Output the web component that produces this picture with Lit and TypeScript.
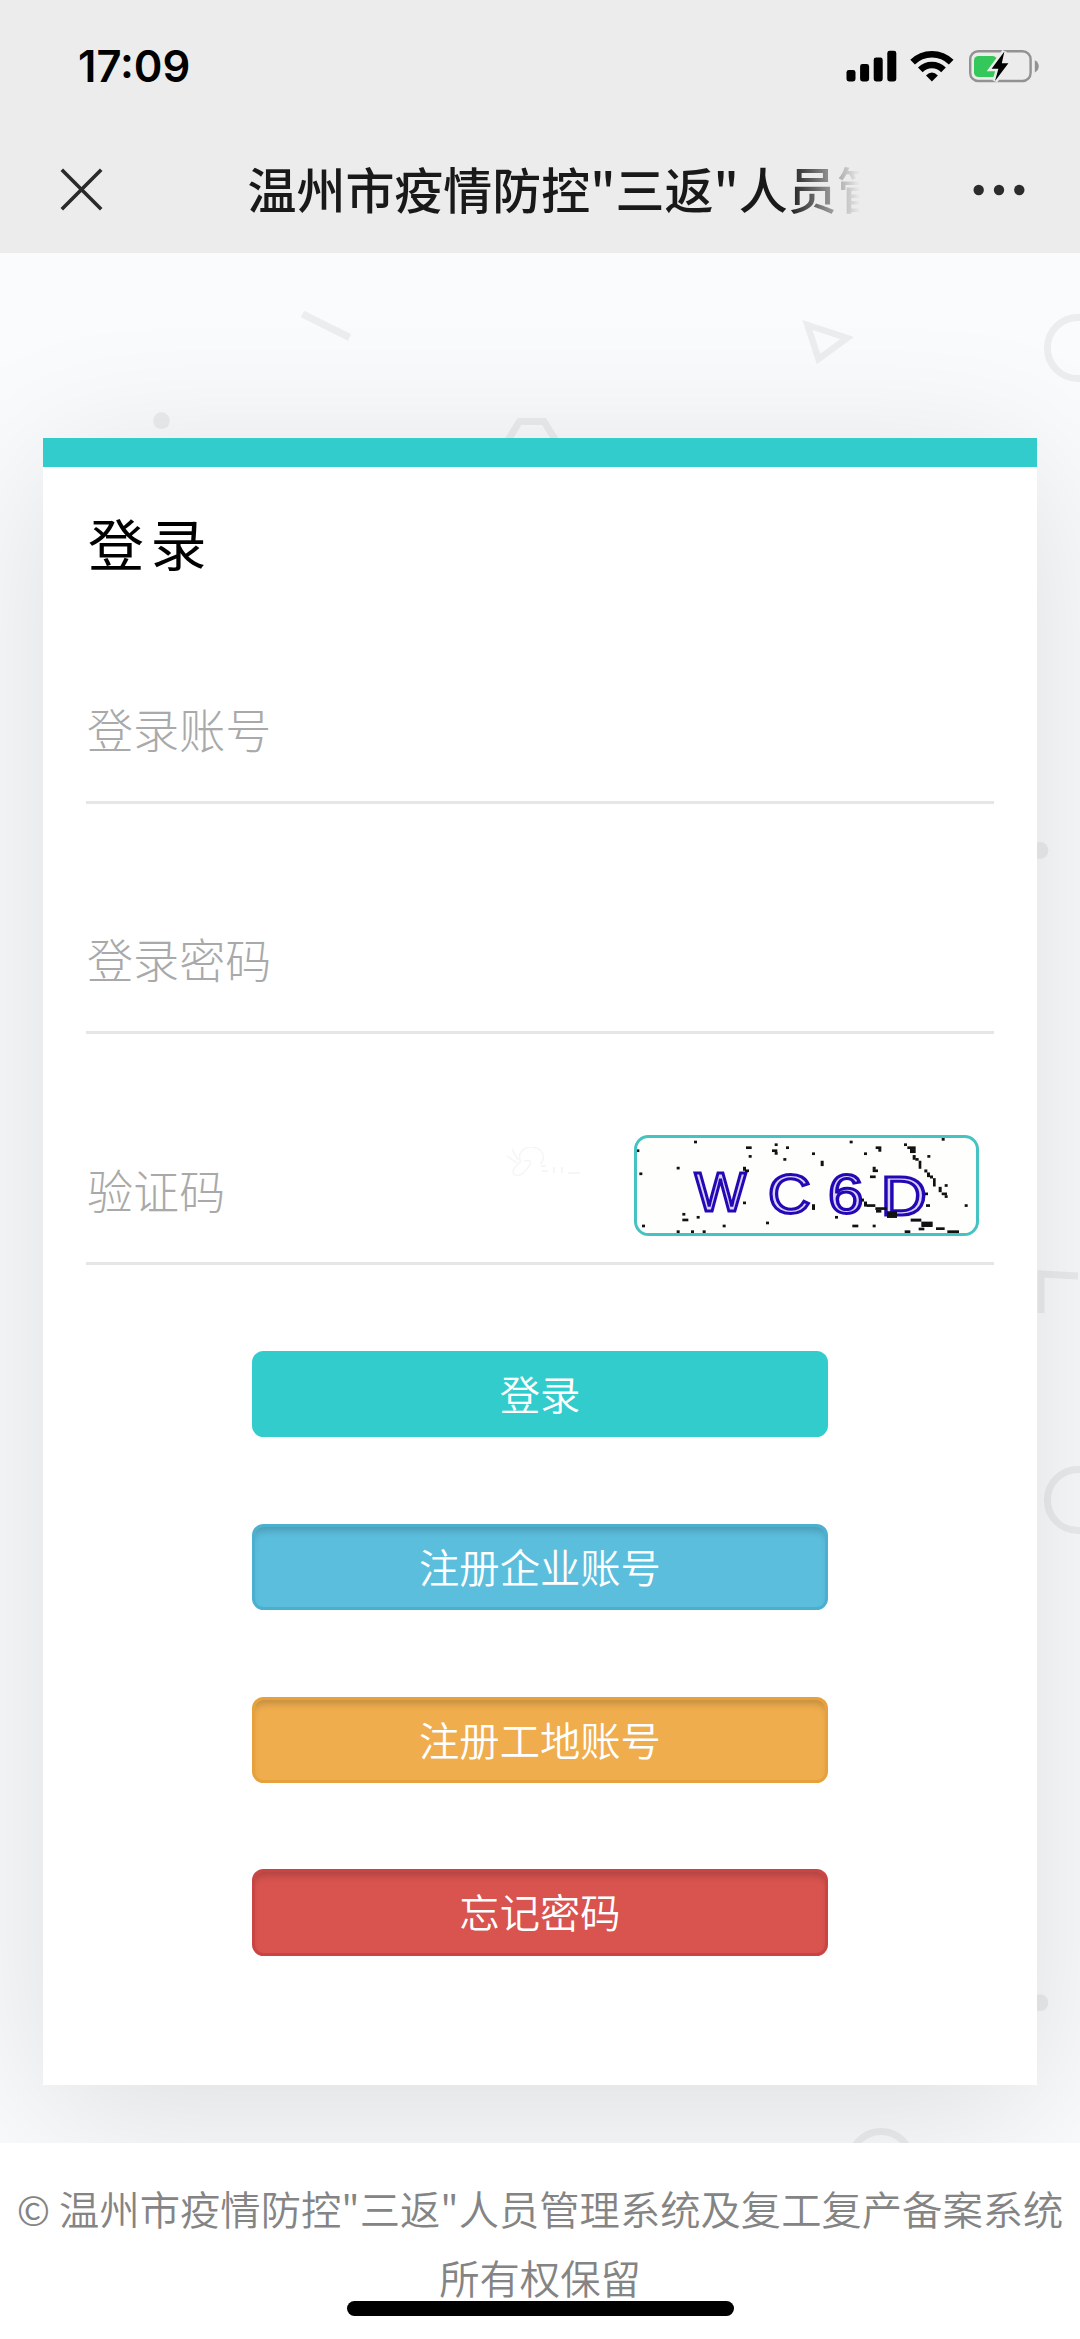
import { LitElement, html, css, svg } from "lit";
import { customElement, property } from "lit/decorators.js";

const FONT = css`"Noto Sans CJK SC", "Noto Sans", sans-serif`;

@customElement("status-bar")
class StatusBar extends LitElement {
  static styles = css`
    :host { display: flex; justify-content: space-between; height: 132px; box-sizing: border-box; padding: 0 40px 0 78px; }
    .time { font: 600 43.5px/132px Inter, sans-serif; letter-spacing: 0; color: #000; }
    .icons { width: 196px; height: 132px; display: block; }
  `;
  render() {
    return html`
      <span class="time">17:09</span>
      <svg class="icons" viewBox="844 0 196 132">
        <rect x="846.5" y="70" width="9" height="11.5" rx="2.4" />
        <rect x="860.1" y="64" width="9" height="17.5" rx="2.4" />
        <rect x="873.7" y="57.6" width="9" height="23.9" rx="2.4" />
        <rect x="887.3" y="50.8" width="9" height="30.7" rx="2.4" />
        <g fill="none" stroke="#000" stroke-width="6.6">
          <path d="M912.6 62.2A27.5 27.5 0 0 1 951.2 62.2" />
          <path d="M920.3 69.8A16.6 16.6 0 0 1 943.5 69.8" />
        </g>
        <path d="M926 75.4Q931.9 69.6 937.9 75.4L931.9 81.4Z" />
        <rect x="970.2" y="51.2" width="60.4" height="29.8" rx="8" fill="none" stroke="#929292" stroke-width="2.4" />
        <path d="M1034.8 60.2Q1038.7 62 1038.7 66.2T1034.8 72.4Z" fill="#929292" />
        <rect x="974" y="56" width="23" height="21" rx="4.6" fill="#34c759" />
        <path d="M1004.4 51.4L991.6 68.8H998.4L995 81L1008.4 63.2H1001.8Z" stroke="#ececec" stroke-width="5" />
        <path d="M1004.4 51.4L991.6 68.8H998.4L995 81L1008.4 63.2H1001.8Z" />
      </svg>
    `;
  }
}

@customElement("nav-bar")
class NavBar extends LitElement {
  static styles = css`
    :host { display: flex; align-items: center; height: 121px; box-sizing: border-box; padding: 0 53px 6px 60px; }
    .close { width: 43px; height: 43px; }
    .title { width: 612px; margin: 0 0 3px 144.5px; overflow: hidden; white-space: nowrap; font: 500 48.96px/72px ${FONT}; color: #191919;
      -webkit-mask-image: linear-gradient(90deg, #000 540px, transparent 612px); mask-image: linear-gradient(90deg, #000 540px, transparent 612px); }
    .more { width: 54px; height: 14px; margin-left: auto; }
  `;
  @property() heading = "";
  render() {
    return html`
      <svg class="close" viewBox="0 0 43 43"><path d="M1.8 1.8L41.2 41.2M41.2 1.8L1.8 41.2" stroke="#2a2a2a" stroke-width="3.6" /></svg>
      <div class="title">${this.heading}</div>
      <svg class="more" viewBox="0 0 54 14" fill="#2c2c2c"><circle cx="5.7" cy="7" r="5.2" /><circle cx="26" cy="7" r="5.2" /><circle cx="46.3" cy="7" r="5.2" /></svg>
    `;
  }
}

/* Noise specks: x, y, width, height */
const SPECKS = [
  [282,92,9,8],[109,118,9,8],[118,187,9,8],[230,170,9,8],[126,343,9,8],[247,308,9,8],[247,325,18,8],[290,317,9,8],
  [230,360,9,8],[273,360,9,8],[308,360,9,8],[368,343,9,8],[498,334,9,8],[438,109,17,8],[446,135,9,8],[429,170,9,12],
  [435,178,12,8],[429,274,9,8],[524,100,9,8],[516,118,16,8],[524,126,9,8],[558,109,9,8],[550,144,9,8],[636,127,9,8],
  [662,152,9,16],[749,92,9,8],[792,127,9,8],[827,109,17,8],[835,117,9,8],[1025,84,9,8],[982,135,9,8],[818,170,9,9],
  [818,178,16,8],[810,196,17,8],[636,282,9,17],[705,317,9,8],[757,343,18,8],[818,343,9,8],[914,360,17,8],[1094,282,9,8],
  [1034,222,9,8],[912,100,9,8],[922,109,25,8],[930,117,17,12],[938,135,9,14],[946,144,10,8],[956,152,8,24],
  [973,178,9,9],[981,187,9,14],[990,196,9,9],[999,204,8,25],[1016,230,9,16],[1025,247,16,8],[1034,255,9,8],
  [783,265,9,9],[792,274,9,15],[800,282,26,8],[826,291,35,8],[828,299,16,8],[861,303,30,20],[978,282,12,8],
  [932,325,32,9],[964,334,34,16],[956,352,17,8],[1008,351,26,8],[1042,360,35,8],[975,247,9,8]
];

@customElement("captcha-image")
class CaptchaImage extends LitElement {
  static styles = css`
    :host { display: block; width: 345px; height: 101px; box-sizing: border-box; border: 3px solid #45c3c3; border-radius: 14.4px; overflow: hidden; background: #fefefd; }
    .art { display: block; width: 100%; height: 100%; }
    .code { font-family: "Liberation Sans", sans-serif; fill: #d9d2fa; stroke: #2408b4; stroke-width: 9; }
  `;
  render() {
    return html`
      <svg class="art" viewBox="111 84 1017 284" preserveAspectRatio="none">
        <g class="code" font-size="164">
          <text x="284" y="301" textLength="154" lengthAdjust="spacingAndGlyphs">W</text>
          <text x="504" y="308" textLength="128" lengthAdjust="spacingAndGlyphs">C</text>
          <text x="684" y="309" textLength="106" lengthAdjust="spacingAndGlyphs">6</text>
          <text x="842" y="314" textLength="138" lengthAdjust="spacingAndGlyphs">D</text>
        </g>
        ${SPECKS.map(([x, y, w, h]) => svg`<rect x=${x} y=${y} width=${w} height=${h} fill="#111" />`)}
      </svg>
    `;
  }
}

@customElement("login-card")
class LoginCard extends LitElement {
  static styles = css`
    :host { display: block; position: relative; box-sizing: border-box; height: 1647px; margin: 0 43px; padding: 0 43px; background: #fff;
      border-top: 29px solid #33cccc; box-shadow: 0 26px 144px rgba(0, 0, 0, 0.12); font-family: ${FONT}; }
    .title { height: 106.4px; padding-left: 2px; font-size: 56px; line-height: 149px; letter-spacing: 6.5px; font-weight: 400; margin: 0; color: #000; }
    .row { display: flex; align-items: flex-end; height: 230.4px; box-sizing: border-box; border-bottom: 3px solid #e6e6e6; }
    .input { flex: 1; min-width: 0; height: 142px; box-sizing: border-box; border: 0; padding: 0 0 4px 1px; outline: 0; background: none; font: 300 46.08px ${FONT}; color: #333; }
    .input::placeholder { color: #a9a9a9; opacity: 1; }
    .mark { align-self: flex-end; width: 80px; height: 30px; margin: 0 50px 85px 0; }
    .captcha { margin: 0 15px 26px 0; }
    .actions { display: flex; flex-direction: column; align-items: center; gap: 86.4px; padding-top: 86.4px; }
    .btn { width: 576px; height: 86.4px; box-sizing: border-box; padding: 0 0 2px; border: 3px solid; border-radius: 11.5px; color: #fff; font: 350 40.32px/78px ${FONT}; }
    .primary { background: #33cccc; border-color: #33cccc; }
    .pressed { box-shadow: inset 0 7px 7px -3px rgba(0, 0, 0, 0.18); }
    .info { background: #5bbedd; border-color: #4bb0cf; }
    .warning { background: #f0ad4e; border-color: #e6a03c; }
    .danger { background: #d9534f; border-color: #c94543; }
  `;
  render() {
    return html`
      <h1 class="title">登录</h1>
      <div class="row"><input class="input" placeholder="登录账号" /></div>
      <div class="row"><input class="input" placeholder="登录密码" /></div>
      <div class="row">
        <input class="input" placeholder="验证码" />
        <svg class="mark" viewBox="0 0 80 30" fill="none" stroke="#f6f6f6" stroke-width="1.6">
          <path d="M3 9L13 16M8 2L14 13M17 15A12 10 0 1 1 36 17M16 15Q5 25 11 28T26 18Q28 12 20 14" />
          <path d="M37 19H42M38 24H44M50 20V26M58 20V26M64 26H76" stroke-width="2.2" />
        </svg>
        <captcha-image class="captcha"></captcha-image>
      </div>
      <div class="actions">
        <button class="btn primary">登录</button>
        <button class="btn pressed info">注册企业账号</button>
        <button class="btn pressed warning">注册工地账号</button>
        <button class="btn pressed danger">忘记密码</button>
      </div>
    `;
  }
}

@customElement("app-root")
class AppRoot extends LitElement {
  static styles = css`
    :host { display: flex; flex-direction: column; width: 1080px; height: 2339px; overflow: hidden; position: relative; background: #fff; }
    .top { height: 253px; background: #ececec; }
    .stage { position: relative; height: 1890px; box-sizing: border-box; padding-top: 185px; overflow: hidden; background: #fafbfc; }
    .pattern { position: absolute; inset: 0; width: 1080px; height: 1890px; }
    .footer { padding: 29.5px 0 0; text-align: center; font: 350 40.32px/69.1px ${FONT}; color: #848484; }
    .home { position: absolute; left: 347px; bottom: 23px; width: 387px; height: 15px; border-radius: 8px; background: #000; }
  `;
  render() {
    return html`
      <div class="top">
        <status-bar></status-bar>
        <nav-bar heading='温州市疫情防控"三返"人员管'></nav-bar>
      </div>
      <div class="stage">
        <svg class="pattern" viewBox="0 253 1080 1890" fill="none" stroke="#ebedee" stroke-width="7">
          <path d="M302.5 314L349.5 337.5" />
          <path d="M505 445L519.5 421.5H544L558.5 445" />
          <path d="M807.5 325L847 338L818.5 359Z" stroke-width="6.5" />
          <circle cx="1078" cy="348" r="30.6" />
          <circle cx="1078" cy="1500" r="30.6" />
          <circle cx="881" cy="2162" r="30.6" />
          <path d="M1041 1313V1274L1078 1276" />
          <g fill="#ebedee" stroke="none">
            <circle cx="161.5" cy="420.7" r="8.4" />
            <circle cx="1040" cy="850.5" r="8.4" />
            <circle cx="1040" cy="2002.7" r="8.4" />
          </g>
        </svg>
        <login-card></login-card>
      </div>
      <div class="footer">© 温州市疫情防控"三返"人员管理系统及复工复产备案系统<br />所有权保留</div>
      <div class="home"></div>
    `;
  }
}
